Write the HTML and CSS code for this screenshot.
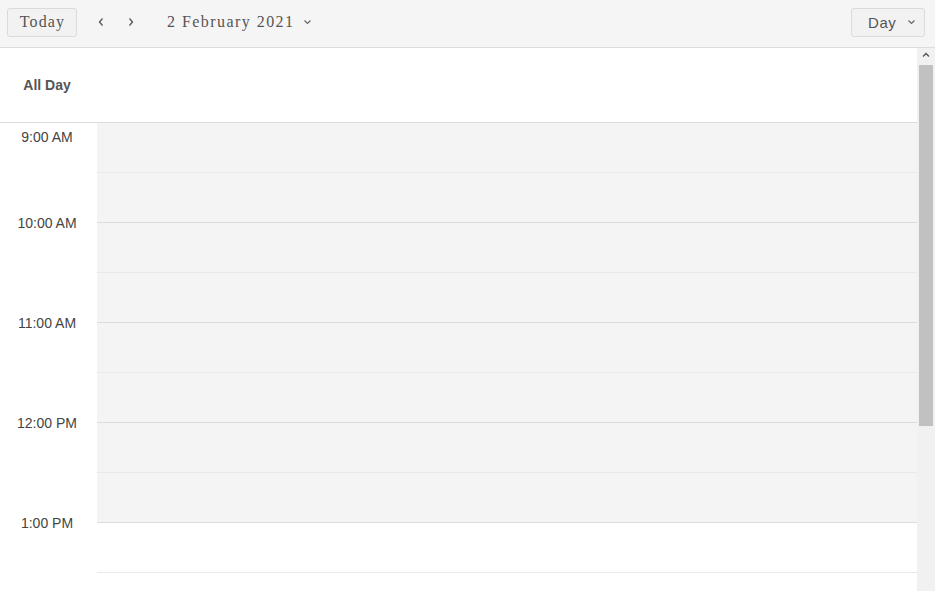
FILE: index.html
```html
<!DOCTYPE html>
<html>
<head>
<meta charset="utf-8">
<link rel="stylesheet" href="styles.css">
</head>
<body>
<div class="toolbar">
  <button class="btn today">Today</button>
  <div class="nav">
    <span class="arrow"><svg width="8" height="10" viewBox="0 0 8 10"><path d="M5.5 1.5 L2.5 5 L5.5 8.5" fill="none" stroke="#555" stroke-width="1.3"/></svg></span>
    <span class="arrow"><svg width="8" height="10" viewBox="0 0 8 10"><path d="M2.5 1.5 L5.5 5 L2.5 8.5" fill="none" stroke="#555" stroke-width="1.3"/></svg></span>
  </div>
  <div class="date">2 February 2021<svg class="caret" width="9" height="6" viewBox="0 0 9 6"><path d="M1.5 1.5 L4.5 4.5 L7.5 1.5" fill="none" stroke="#666" stroke-width="1.2"/></svg></div>
  <div class="spacer"></div>
  <button class="btn view">Day<svg class="caret" width="9" height="6" viewBox="0 0 9 6"><path d="M1.5 1.5 L4.5 4.5 L7.5 1.5" fill="none" stroke="#666" stroke-width="1.2"/></svg></button>
</div>
<div class="main">
  <div class="content">
    <div class="allday">
      <div class="allday-label">All Day</div>
      <div class="allday-cell"></div>
    </div>
    <div class="hour first work">
      <div class="time"><span>9:00 AM</span></div>
      <div class="slots"><div class="slot"></div><div class="slot"></div></div>
    </div>
    <div class="hour work">
      <div class="time"><span>10:00 AM</span></div>
      <div class="slots"><div class="slot"></div><div class="slot"></div></div>
    </div>
    <div class="hour work">
      <div class="time"><span>11:00 AM</span></div>
      <div class="slots"><div class="slot"></div><div class="slot"></div></div>
    </div>
    <div class="hour work">
      <div class="time"><span>12:00 PM</span></div>
      <div class="slots"><div class="slot"></div><div class="slot"></div></div>
    </div>
    <div class="hour">
      <div class="time"><span>1:00 PM</span></div>
      <div class="slots"><div class="slot"></div><div class="slot"></div></div>
    </div>
  </div>
  <div class="scrollbar">
    <div class="sb-btn"><svg width="8" height="6" viewBox="0 0 8 6"><path d="M1 4.5 L4 1.5 L7 4.5" fill="none" stroke="#505050" stroke-width="1.3"/></svg></div>
    <div class="sb-thumb"></div>
  </div>
</div>
</body>
</html>
```
FILE: styles.css
```css
* { box-sizing: border-box; }
html, body { margin: 0; padding: 0; }
body {
  width: 935px;
  height: 591px;
  overflow: hidden;
  font-family: "Liberation Sans", Arial, sans-serif;
  color: #444;
  background: #fff;
}
.toolbar {
  height: 48px;
  background: #f5f5f5;
  border-bottom: 1px solid #dcdcdc;
  display: flex;
  align-items: center;
  padding: 0 10px 3px 7px;
}
.btn {
  height: 29px;
  border: 1px solid #dadada;
  border-radius: 3px;
  background: #f2f2f2;
  color: #555;
  margin: 0;
  display: flex;
  align-items: center;
  cursor: pointer;
}
.today {
  width: 70px;
  justify-content: center;
  font-family: "Liberation Serif", "Times New Roman", serif;
  font-size: 16px;
  letter-spacing: 1.1px;
  padding: 0 0 0 1px;
}
.nav {
  display: flex;
  align-items: center;
  gap: 22px;
  margin-left: 20px;
}
.arrow {
  display: flex;
  width: 8px;
  height: 10px;
}
.date {
  margin-left: 32px;
  font-family: "Liberation Serif", "Times New Roman", serif;
  font-size: 16px;
  letter-spacing: 1.45px;
  color: #555;
  display: flex;
  align-items: center;
}
.date .caret { margin-left: 8px; }
.spacer { flex: 1; }
.view {
  width: 74px;
  padding: 0 0 0 16px;
  font-family: "Liberation Sans", Arial, sans-serif;
  font-size: 15px;
  letter-spacing: 0.6px;
}
.view .caret { margin-left: 11px; }
.main {
  display: flex;
  height: 543px;
  overflow: hidden;
}
.content {
  width: 917px;
  flex: none;
}
.allday {
  display: flex;
  height: 75px;
  border-bottom: 1px solid #dcdcdc;
}
.allday-label {
  width: 97px;
  padding: 29px 3px 0 0;
  text-align: center;
  font-weight: bold;
  font-size: 14px;
  color: #555;
  line-height: 16px;
}
.allday-cell { flex: 1; }
.hour {
  display: flex;
  height: 100px;
}
.hour.first { height: 99px; }
.time {
  width: 97px;
  flex: none;
  text-align: center;
  padding-right: 3px;
  font-size: 14px;
  line-height: 16px;
  color: #444;
}
.time span {
  display: block;
  margin-top: -7px;
}
.first .time span { margin-top: 6px; }
.slots {
  flex: 1;
  border-top: 1px solid #dcdcdc;
}
.first .slots { border-top: none; }
.work .slots { background: #f4f4f4; }
.slot {
  height: 50px;
  border-bottom: 1px solid #e9e9e9;
}
.slot + .slot { border-bottom: none; }
.scrollbar {
  width: 18px;
  flex: none;
  background: #f1f1f1;
  display: flex;
  flex-direction: column;
  align-items: center;
}
.sb-btn {
  height: 17px;
  width: 18px;
  display: flex;
  align-items: center;
  justify-content: center;
  padding-bottom: 4px;
}
.sb-thumb {
  width: 14px;
  height: 361px;
  background: #c1c1c1;
}
```
